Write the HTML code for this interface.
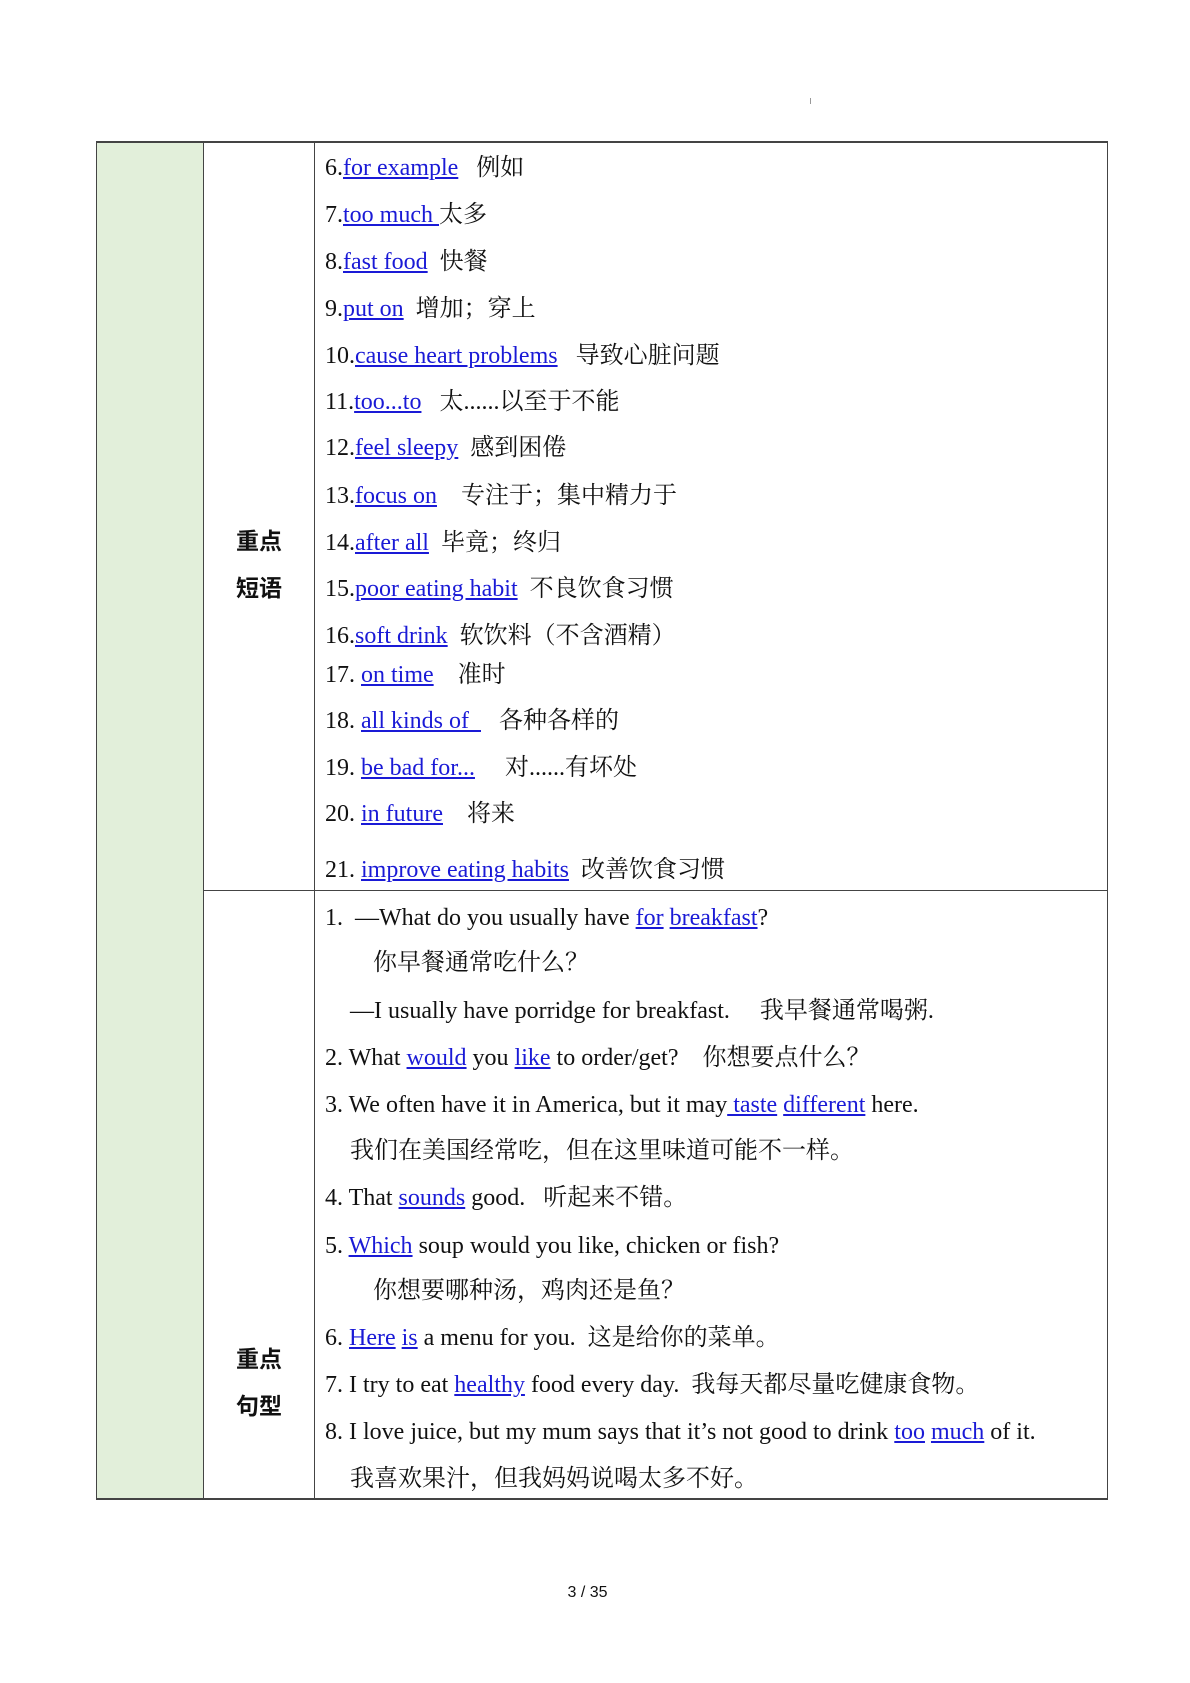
<!DOCTYPE html>
<html><head><meta charset="utf-8"><style>
body{margin:0;width:1190px;height:1683px;background:#fff;position:relative;overflow:hidden;font-family:"Liberation Serif","Noto Serif CJK SC",serif;font-size:24px;color:#111}
.l{position:absolute;white-space:pre;line-height:28px;margin-top:2px}
u{color:#1a1ad6;text-decoration:underline;text-underline-offset:2px}
.b{position:absolute;background:#444}
.lab{position:absolute;font-family:"Liberation Sans","Noto Sans CJK SC",sans-serif;font-weight:bold;font-size:23px;line-height:28px;left:236px;margin-top:1px}
</style></head><body>
<div style="position:absolute;left:97px;top:142px;width:106px;height:1357px;background:#e2efda"></div>
<div class="b" style="left:96px;top:141px;width:1012px;height:2px"></div>
<div class="b" style="left:96px;top:1498px;width:1012px;height:2px"></div>
<div class="b" style="left:96px;top:141px;width:1px;height:1359px"></div>
<div class="b" style="left:1107px;top:141px;width:1px;height:1359px"></div>
<div class="b" style="left:203px;top:141px;width:1px;height:1359px"></div>
<div class="b" style="left:314px;top:141px;width:1px;height:1359px"></div>
<div class="b" style="left:203px;top:890px;width:905px;height:1px"></div>
<div style="position:absolute;left:810px;top:98px;width:1px;height:6px;background:#999"></div>
<div class="lab" style="top:526px">重点</div>
<div class="lab" style="top:573px">短语</div>
<div class="lab" style="top:1344px">重点</div>
<div class="lab" style="top:1391px">句型</div>
<div class="l" style="left:325px;top:152px">6.<u>for example</u>   例如</div>
<div class="l" style="left:325px;top:199px">7.<u>too much </u>太多</div>
<div class="l" style="left:325px;top:246px">8.<u>fast food</u>  快餐</div>
<div class="l" style="left:325px;top:293px">9.<u>put on</u>  增加；穿上</div>
<div class="l" style="left:325px;top:340px">10.<u>cause heart problems</u>   导致心脏问题</div>
<div class="l" style="left:325px;top:386px">11.<u>too...to</u>   太......以至于不能</div>
<div class="l" style="left:325px;top:432px">12.<u>feel sleepy</u>  感到困倦</div>
<div class="l" style="left:325px;top:480px">13.<u>focus on</u>    专注于；集中精力于</div>
<div class="l" style="left:325px;top:527px">14.<u>after all</u>  毕竟；终归</div>
<div class="l" style="left:325px;top:573px">15.<u>poor eating habit</u>  不良饮食习惯</div>
<div class="l" style="left:325px;top:620px">16.<u>soft drink</u>  软饮料（不含酒精）</div>
<div class="l" style="left:325px;top:659px">17. <u>on time</u>    准时</div>
<div class="l" style="left:325px;top:705px">18. <u>all kinds of  </u>   各种各样的</div>
<div class="l" style="left:325px;top:752px">19. <u>be bad for...</u>     对......有坏处</div>
<div class="l" style="left:325px;top:798px">20. <u>in future</u>    将来</div>
<div class="l" style="left:325px;top:854px">21. <u>improve eating habits</u>  改善饮食习惯</div>
<div class="l" style="left:325px;top:902px">1.  —What do you usually have <u>for</u> <u>breakfast</u>?</div>
<div class="l" style="left:373px;top:947px">你早餐通常吃什么？</div>
<div class="l" style="left:350px;top:995px">—I usually have porridge for breakfast.     我早餐通常喝粥.</div>
<div class="l" style="left:325px;top:1042px">2. What <u>would</u> you <u>like</u> to order/get?    你想要点什么？</div>
<div class="l" style="left:325px;top:1089px">3. We often have it in America, but it may<u> taste</u> <u>different</u> here.</div>
<div class="l" style="left:350px;top:1135px">我们在美国经常吃，但在这里味道可能不一样。</div>
<div class="l" style="left:325px;top:1182px">4. That <u>sounds</u> good.   听起来不错。</div>
<div class="l" style="left:325px;top:1230px">5. <u>Which</u> soup would you like, chicken or fish?</div>
<div class="l" style="left:373px;top:1275px">你想要哪种汤，鸡肉还是鱼？</div>
<div class="l" style="left:325px;top:1322px">6. <u>Here</u> <u>is</u> a menu for you.  这是给你的菜单。</div>
<div class="l" style="left:325px;top:1369px">7. I try to eat <u>healthy</u> food every day.  我每天都尽量吃健康食物。</div>
<div class="l" style="left:325px;top:1416px">8. I love juice, but my mum says that it’s not good to drink <u>too</u> <u>much</u> of it.</div>
<div class="l" style="left:350px;top:1463px">我喜欢果汁，但我妈妈说喝太多不好。</div>
<div class="l" style="left:0;width:1175px;text-align:center;top:1579px;font-family:'Liberation Sans',sans-serif;font-size:16px;line-height:24px">3 / 35</div>
</body></html>
